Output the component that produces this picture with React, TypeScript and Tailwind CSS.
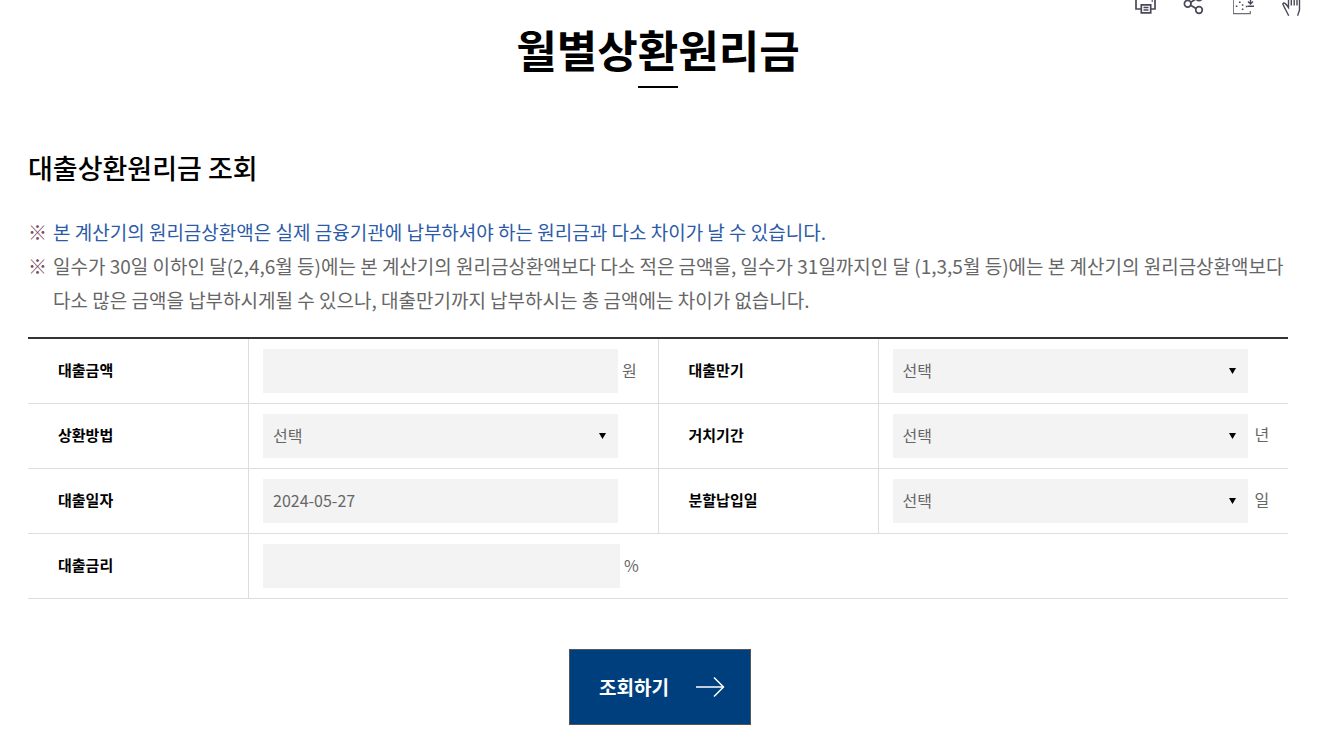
import type { ReactNode } from "react";

const fieldBase =
  "block h-11 max-w-full min-w-0 appearance-none rounded-none border-0 bg-[#f3f3f3] px-[10px] pt-0 pb-[2px] text-base text-[#666] outline-none";

function IconButton({ label, children }: { label: string; children: ReactNode }) {
  return (
    <button type="button" aria-label={label} className="block h-[18px] w-6 text-[#4a4858]">
      <svg viewBox="0 0 24 18" className="block h-[18px] w-6" fill="none" stroke="currentColor" strokeWidth="1.7">
        {children}
      </svg>
    </button>
  );
}

function Label({ id, children }: { id: string; children: ReactNode }) {
  return (
    <th
      scope="row"
      className="border-r border-b border-[#ddd] pt-0 pr-0 pb-[2px] pl-[30px] text-left text-[15px] font-bold text-black"
    >
      <label htmlFor={id}>{children}</label>
    </th>
  );
}

function Choice({ id }: { id: string }) {
  return (
    <div className="relative w-[355px] max-w-full min-w-0">
      <select id={id} className={`${fieldBase} w-full`}>
        <option>선택</option>
      </select>
      <svg viewBox="0 0 7 6" className="pointer-events-none absolute top-[19px] right-3 h-[6px] w-[7px]">
        <path d="M0 0H7L3.5 6Z" fill="#000" />
      </svg>
    </div>
  );
}

const cell = "border-b border-[#ddd] py-[10px] pl-[14px] pr-0";
const midCell = "border-r border-b border-[#ddd] py-[10px] pl-[14px] pr-0";

export default function App() {
  return (
    <div className="bg-white font-['Noto_Sans_CJK_KR','Noto_Sans',sans-serif] text-[#666]">
      <div className="flex h-[18px] justify-end gap-[25px] overflow-hidden pr-[18px]">
        <IconButton label="인쇄">
          <path d="M8 9H3V-6H22V9H18" />
          <path d="M8.3 4.8H17.7V12.8H8.3Z" />
          <path d="M10.5 7.5H15.5M10.5 10H15.5" strokeWidth="1.3" />
          <path d="M18.5 1H20" />
        </IconButton>
        <IconButton label="공유">
          <circle cx="5.7" cy="3.8" r="3.3" />
          <circle cx="17" cy="10" r="3.3" />
          <circle cx="17" cy="-2.6" r="3.3" />
          <path d="M8.7 5.3L14 8.5M8.7 2.3L14 -1" />
        </IconButton>
        <IconButton label="저장">
          <path d="M2.5 -6V13.5" strokeWidth="1" opacity="0.7" />
          <path d="M2 13.7H19.3V11" strokeWidth="1.2" opacity="0.8" />
          <path d="M19.5 -4V4M17 1.5L19.5 4L22 1.5M16.5 6.3H23" strokeWidth="1.4" />
          <path d="M8 2.2H9.6M4.8 6.2H6.4M10.8 5H12.4M10.8 9.3H12.4M14.8 6.5H16.4" strokeWidth="1.6" />
        </IconButton>
        <IconButton label="수어">
          <path
            d="M8.7 15.8C7 12 4.3 7.5 2.8 4C3.6 1.8 5.8 3.4 8.5 7.5V-4M11.3 5.5V-4M14.2 5.5V-4M17 5.5V-4M19.5 -4V9.5C19.5 12 18 13 17.8 15.8"
            strokeWidth="1.4"
          />
        </IconButton>
      </div>
      <main className="pr-[34px] pb-[5px] pl-7">
        <h1 className="text-center text-[44px] leading-[62px] font-bold text-black">월별상환원리금</h1>
        <div className="mx-auto mt-[6px] h-[2px] w-10 bg-black" />
        <h2 className="mt-[60px] text-[27px] leading-10 font-medium text-black">대출상환원리금 조회</h2>
        <ul className="mt-[27px] text-[19px] leading-[34px]">
          <li className="flex">
            <span className="w-[25px] shrink-0 font-light text-[#80495f]">※</span>
            <span className="text-[#2b5ba8]">
              본 계산기의 원리금상환액은 실제 금융기관에 납부하셔야 하는 원리금과 다소 차이가 날 수 있습니다.
            </span>
          </li>
          <li className="flex">
            <span className="w-[25px] shrink-0 font-light text-[#80495f]">※</span>
            <span className="break-keep">
              일수가 30일 이하인 달(2,4,6월 등)에는 본 계산기의 원리금상환액보다 다소 적은 금액을, 일수가 31일까지인 달
              (1,3,5월 등)에는 본 계산기의 원리금상환액보다 다소 많은 금액을 납부하시게될 수 있으나, 대출만기까지
              납부하시는 총 금액에는 차이가 없습니다.
            </span>
          </li>
        </ul>
        <form onSubmit={(e) => e.preventDefault()}>
          <table className="mt-5 w-full table-fixed border-separate border-spacing-0 border-t-2 border-[#333] text-base">
            <colgroup>
              <col className="w-[221px]" />
              <col />
              <col className="w-[220px]" />
              <col />
            </colgroup>
            <tbody>
              <tr>
                <Label id="amount">대출금액</Label>
                <td className={midCell}>
                  <div className="flex items-center gap-1">
                    <input id="amount" type="text" className={`${fieldBase} w-[355px]`} />
                    <span className="pb-[2px]">원</span>
                  </div>
                </td>
                <Label id="term">대출만기</Label>
                <td className={cell}>
                  <Choice id="term" />
                </td>
              </tr>
              <tr>
                <Label id="method">상환방법</Label>
                <td className={midCell}>
                  <Choice id="method" />
                </td>
                <Label id="grace">거치기간</Label>
                <td className={cell}>
                  <div className="flex items-center gap-[7px]">
                    <Choice id="grace" />
                    <span className="pb-1">년</span>
                  </div>
                </td>
              </tr>
              <tr>
                <Label id="date">대출일자</Label>
                <td className={midCell}>
                  <input id="date" type="text" defaultValue="2024-05-27" className={`${fieldBase} w-[355px]`} />
                </td>
                <Label id="payday">분할납입일</Label>
                <td className={cell}>
                  <div className="flex items-center gap-[7px]">
                    <Choice id="payday" />
                    <span className="pb-1">일</span>
                  </div>
                </td>
              </tr>
              <tr>
                <Label id="rate">대출금리</Label>
                <td className={cell} colSpan={3}>
                  <div className="flex items-center gap-1">
                    <input id="rate" type="text" className={`${fieldBase} w-[357px]`} />
                    <span className="pb-[2px]">%</span>
                  </div>
                </td>
              </tr>
            </tbody>
          </table>
          <div className="mt-[50px] flex justify-center pl-1">
            <button
              type="submit"
              className="flex h-[76px] w-[182px] items-center justify-center gap-[26px] border border-[#555] bg-[#003f7d] pl-1 text-[19px] font-bold text-white"
            >
              조회하기
              <svg viewBox="0 0 30 22" className="h-[22px] w-[30px]" fill="none" stroke="#fff" strokeWidth="1.5">
                <path d="M1 11H28.5M19 1.5L28.5 11L19 20.5" />
              </svg>
            </button>
          </div>
        </form>
      </main>
    </div>
  );
}
